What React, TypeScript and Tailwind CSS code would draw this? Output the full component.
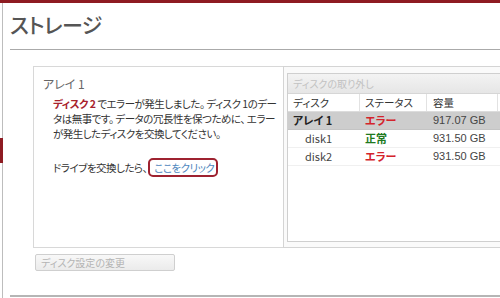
import React from 'react';

const jp = "font-['Noto_Sans_CJK_JP','Noto_Sans',sans-serif] [font-feature-settings:'palt']";

interface DiskRow {
  name: string;
  status: string;
  ok: boolean;
  size: string;
  array?: boolean;
}

const rows: DiskRow[] = [
  { name: 'アレイ 1', status: 'エラー', ok: false, size: '917.07 GB', array: true },
  { name: 'disk1', status: '正常', ok: true, size: '931.50 GB' },
  { name: 'disk2', status: 'エラー', ok: false, size: '931.50 GB' },
];

const DiskTable: React.FC = () => (
  <div className="flex-1 h-[182px] border border-[#d4d4d4] border-r-0 bg-[#fafafa] pt-[6px] pl-[3px]">
    <div className="h-[169px] border border-[#cfcfcf] border-r-0 bg-white overflow-hidden">
      <div className="h-[20px] flex items-center pl-[5px] bg-gradient-to-b from-[#f3f3f3] to-[#e6e6e6] border-b border-[#d6d6d6] text-[10px] text-[#c2c2c2]">
        ディスクの取り外し
      </div>
      <div className="flex h-[18px] items-center border-b border-[#dcdcdc] text-[10.5px] text-[#333]">
        <div className="w-[72px] pl-[5px] h-full flex items-center border-r border-[#e2e2e2]">ディスク</div>
        <div className="w-[67px] pl-[5px] h-full flex items-center border-r border-[#e2e2e2]">ステータス</div>
        <div className="w-[71px] pl-[6px] h-full flex items-center border-r border-[#e2e2e2]">容量</div>
        <div className="flex-1" />
      </div>
      {rows.map((r) => (
        <div
          key={r.name}
          className={`flex h-[18px] items-center text-[11px] border-b ${r.array ? 'bg-[#cdcdcd] border-[#c4c4c4]' : 'bg-white border-[#f0f0f0]'}`}
        >
          <div className={`w-[72px] ${r.array ? 'pl-[5px] font-bold text-[#222]' : 'pl-[17px] text-[#444]'}`}>{r.name}</div>
          <div className={`w-[67px] pl-[5px] font-bold ${r.ok ? 'text-[#1f7a1f]' : 'text-[#d4232b]'}`}>{r.status}</div>
          <div className="w-[71px] pl-[6px] text-[#444] font-['Liberation_Sans',sans-serif]">{r.size}</div>
        </div>
      ))}
    </div>
  </div>
);

export default function App() {
  return (
    <div className={`w-[500px] h-[298px] overflow-hidden bg-white flex flex-col ${jp}`}>
      <div className="h-[3px] bg-[#8e1b22]" />
      <div className="flex flex-1">
        <div className="w-[3px] flex flex-col">
          <div className="h-[135px] border-r border-[#bdbdbd]" />
          <div className="h-[25px] bg-[#8e1b22]" />
          <div className="flex-1 border-r border-[#bdbdbd]" />
        </div>
        <div className="flex-1 pl-[7px] flex flex-col">
          <h1 className="h-[46px] pt-[6px] text-[21px] font-medium text-[#555] tracking-[-0.5px]">ストレージ</h1>
          <div className="h-[1px] bg-[#aaa]" />
          <div className="pl-[23px] pt-[16px] flex">
            <div className="w-[250px] h-[182px] border border-[#d8d8d8] border-r-0 pl-[9px] pt-[9px]">
              <div className="text-[12px] text-[#666] leading-[16px]">アレイ 1</div>
              <p className="mt-[4px] ml-[10px] text-[10.5px] leading-[15px] tracking-[-0.5px] text-[#333] whitespace-nowrap">
                <span className="font-bold text-[#a8222d]">ディスク 2</span> でエラーが発生しました。 ディスク 1のデー
                <br />
                タは無事です。 データの冗長性を保つために、 エラー
                <br />
                が発生したディスクを交換してください。
              </p>
              <div className="mt-[17px] ml-[10px] flex items-center text-[10.5px] tracking-[-0.5px] text-[#333] whitespace-nowrap">
                <span>ドライブを交換したら、</span>
                <span className="ml-[1px] h-[19px] w-[70px] flex items-center pl-[4px] border-2 border-[#9e2230] rounded-[5px] text-[#4e86bd]">
                  ここをクリック
                </span>
              </div>
            </div>
            <DiskTable />
          </div>
          <div className="pl-[25px] pt-[6px]">
            <div className="w-[140px] h-[17px] flex items-center pl-[5px] border border-[#cfcfcf] rounded-[2px] bg-gradient-to-b from-[#f8f8f8] to-[#ebebeb] text-[10px] text-[#b4b4b4]">
              ディスク設定の変更
            </div>
          </div>
          <div className="flex-1" />
          <div className="h-[2px] bg-[#b5b5b5] mb-[1px]" />
        </div>
      </div>
    </div>
  );
}
